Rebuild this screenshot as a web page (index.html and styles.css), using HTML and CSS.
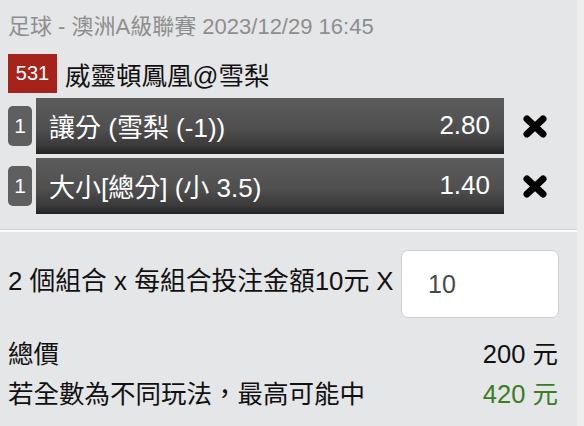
FILE: index.html
```html
<!DOCTYPE html>
<html lang="zh-Hant">
<head>
<meta charset="utf-8">
<link rel="stylesheet" href="styles.css">
</head>
<body>
<div class="page">
  <div class="league">足球 - 澳洲A級聯賽 2023/12/29 16:45</div>
  <div class="match">
    <span class="match-no">531</span>
    <span class="match-name">威靈頓鳳凰@雪梨</span>
  </div>
  <div class="bets">
    <div class="bet">
      <span class="leg">1</span>
      <div class="bar">
        <span class="bar-label">讓分 (雪梨 (-1))</span>
        <span class="bar-odds">2.80</span>
      </div>
      <span class="remove">
        <svg width="26" height="25" viewBox="0 0 26 25"><path d="M5 5 L21 20 M21 5 L5 20" stroke="#000" stroke-width="7" stroke-linecap="round"/></svg>
      </span>
    </div>
    <div class="bet">
      <span class="leg">1</span>
      <div class="bar">
        <span class="bar-label">大小[總分] (小 3.5)</span>
        <span class="bar-odds">1.40</span>
      </div>
      <span class="remove">
        <svg width="26" height="25" viewBox="0 0 26 25"><path d="M5 5 L21 20 M21 5 L5 20" stroke="#000" stroke-width="7" stroke-linecap="round"/></svg>
      </span>
    </div>
  </div>
  <div class="divider"></div>
  <div class="stake">
    <span class="stake-label">2 個組合 x 每組合投注金額10元 X</span>
    <div class="stake-input">10</div>
  </div>
  <div class="totals">
    <div class="total-row"><span>總價</span><span>200 元</span></div>
    <div class="total-row"><span>若全數為不同玩法，最高可能中</span><span class="win">420 元</span></div>
  </div>
</div>
</body>
</html>
```
FILE: styles.css
```css
html, body {
  margin: 0;
  padding: 0;
  background: #eeeeef;
}
body {
  font-family: "Liberation Sans", "Noto Sans CJK TC", sans-serif;
  color: #111;
}
.page {
  width: 577px;
  height: 426px;
  background: #e5e6e8;
  overflow: hidden;
}
.league {
  height: 54px;
  line-height: 54px;
  padding-left: 8px;
  font-size: 22px;
  color: #8e8e8e;
  white-space: nowrap;
}
.match {
  display: flex;
  align-items: center;
  height: 39px;
  margin-bottom: 5px;
  padding-left: 8px;
}
.match-no {
  width: 49px;
  height: 39px;
  line-height: 39px;
  text-align: center;
  background: #a6231b;
  color: #fff;
  font-size: 20px;
}
.match-name {
  margin-left: 8px;
  font-size: 25.5px;
  color: #111;
}
.bets {
  display: flex;
  flex-direction: column;
  gap: 4px;
}
.bet {
  display: flex;
  align-items: center;
  height: 56px;
  padding-left: 8px;
}
.leg {
  width: 24px;
  height: 40px;
  line-height: 40px;
  text-align: center;
  background: #5f5f5f;
  color: #fff;
  border-radius: 5px;
  font-size: 21px;
  margin-right: 4px;
}
.bar {
  display: flex;
  align-items: center;
  justify-content: space-between;
  width: 468px;
  height: 56px;
  box-sizing: border-box;
  padding: 0 14px 2px 13px;
  background: linear-gradient(#5c5c5c 0%, #4f4f4f 55%, #3a3a3a 85%, #222 100%);
  color: #fff;
  font-size: 26px;
}
.remove {
  display: flex;
  margin-left: 18px;
}
.divider {
  margin-top: 15px;
  border-top: 1px solid #d5d6d8;
  border-bottom: 2px solid #fbfbfb;
}
.stake {
  display: flex;
  justify-content: space-between;
  align-items: flex-start;
  padding: 18px 18px 0 8px;
}
.stake-label {
  margin-top: 10px;
  font-size: 25.8px;
  white-space: nowrap;
}
.stake-input {
  width: 158px;
  height: 68px;
  box-sizing: border-box;
  border: 1px solid #cdd1d6;
  border-radius: 7px;
  background: #fff;
  padding-left: 26px;
  line-height: 66px;
  font-size: 25px;
  color: #4a4a4a;
}
.totals {
  margin-top: 16px;
  padding: 0 19px 0 8px;
}
.total-row {
  display: flex;
  justify-content: space-between;
  height: 40px;
  line-height: 40px;
  font-size: 25.5px;
}
.win {
  color: #3a7d22;
}
```
